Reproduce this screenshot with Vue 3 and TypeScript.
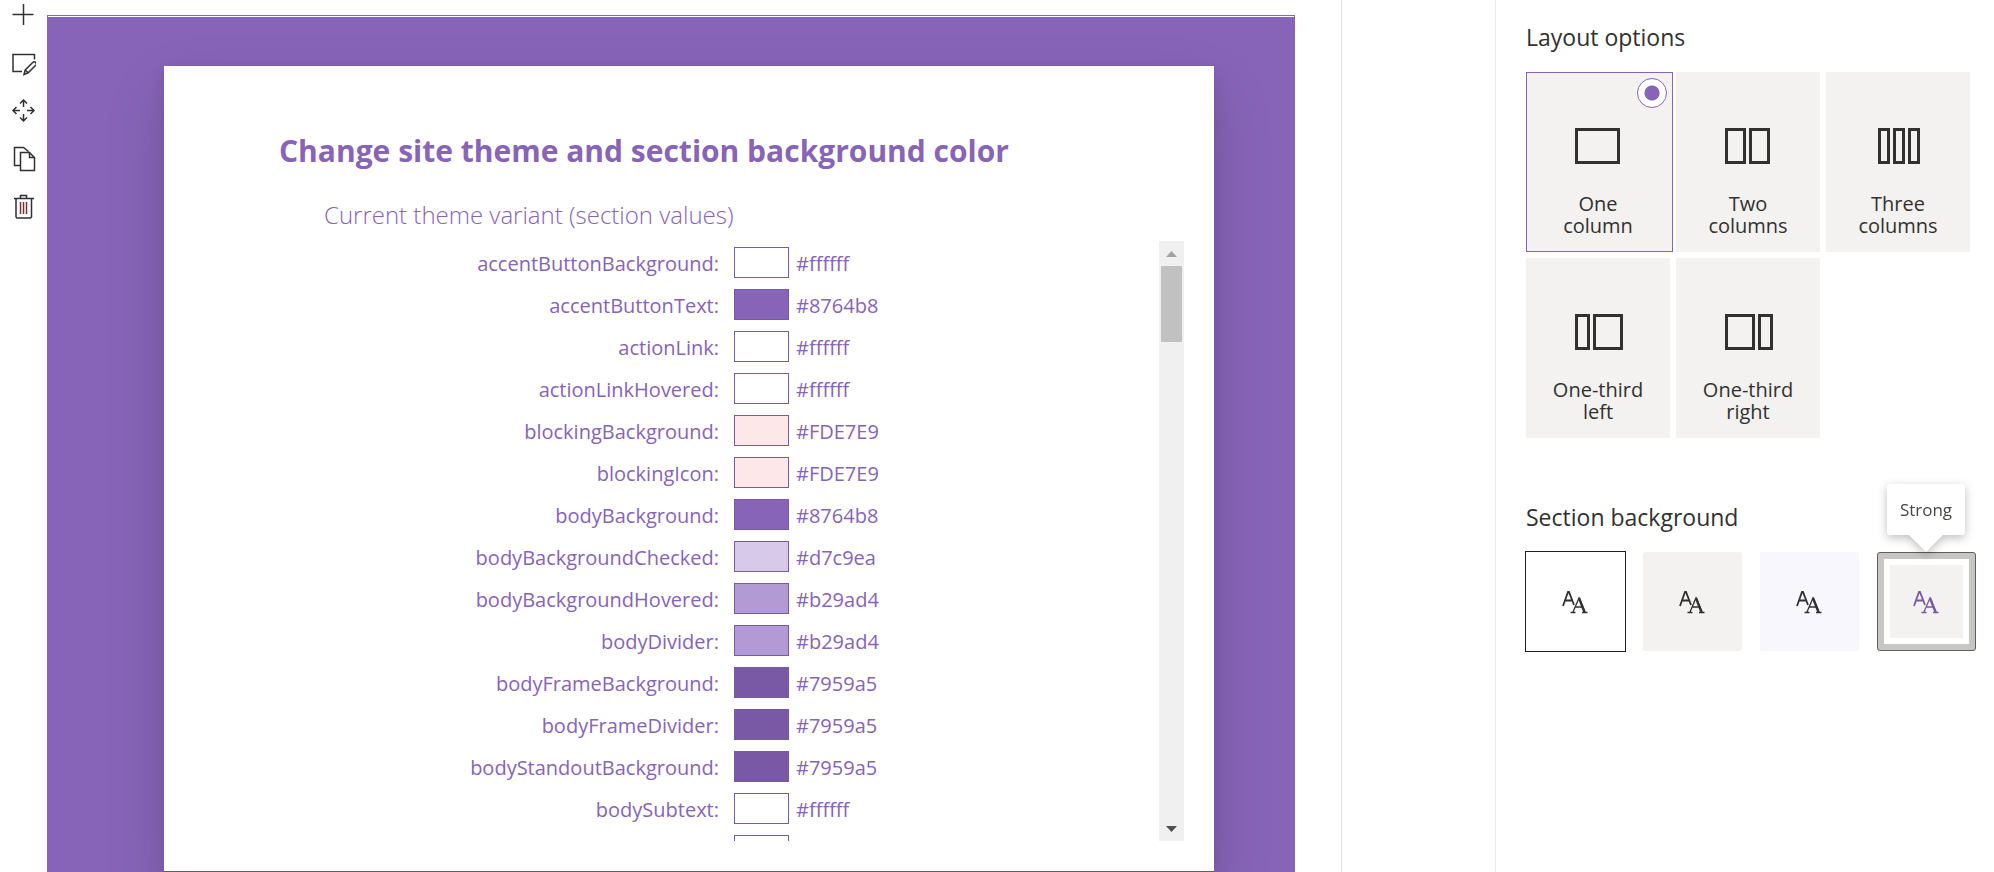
<script setup lang="ts">
import { computed, ref } from 'vue'

interface Slot { name: string; value: string }
interface LayoutOption { id: string; lines: [string, string]; rects: [number, number][] }
interface Shade { id: string; label: string }

const slots: Slot[] = [
  { name: 'accentButtonBackground', value: '#ffffff' },
  { name: 'accentButtonText', value: '#8764b8' },
  { name: 'actionLink', value: '#ffffff' },
  { name: 'actionLinkHovered', value: '#ffffff' },
  { name: 'blockingBackground', value: '#FDE7E9' },
  { name: 'blockingIcon', value: '#FDE7E9' },
  { name: 'bodyBackground', value: '#8764b8' },
  { name: 'bodyBackgroundChecked', value: '#d7c9ea' },
  { name: 'bodyBackgroundHovered', value: '#b29ad4' },
  { name: 'bodyDivider', value: '#b29ad4' },
  { name: 'bodyFrameBackground', value: '#7959a5' },
  { name: 'bodyFrameDivider', value: '#7959a5' },
  { name: 'bodyStandoutBackground', value: '#7959a5' },
  { name: 'bodySubtext', value: '#ffffff' },
  { name: 'bodyText', value: '#ffffff' },
]

// Each pair is the left edge and the width of one column in the glyph.
const layouts: LayoutOption[] = [
  { id: 'one', lines: ['One', 'column'], rects: [[1, 45]] },
  { id: 'two', lines: ['Two', 'columns'], rects: [[1, 21], [25, 21]] },
  { id: 'three', lines: ['Three', 'columns'], rects: [[4, 12], [19, 12], [34, 12]] },
  { id: 'left', lines: ['One-third', 'left'], rects: [[1, 15], [19, 30]] },
  { id: 'right', lines: ['One-third', 'right'], rects: [[1, 30], [34, 15]] },
]

const shades: Shade[] = [
  { id: 'none', label: 'None' },
  { id: 'neutral', label: 'Neutral' },
  { id: 'soft', label: 'Soft' },
  { id: 'strong', label: 'Strong' },
]

const layout = ref('one')
const shade = ref('none')
const list = ref<HTMLElement | null>(null)
const scrolled = ref(0)
const thumbOffset = computed(() => `${Math.round(scrolled.value * 474)}px`)

function onScroll() {
  const el = list.value
  if (!el) return
  scrolled.value = el.scrollTop / Math.max(1, el.scrollHeight - el.clientHeight)
}
function step(amount: number) {
  list.value?.scrollBy({ top: amount })
}
</script>

<template>
  <div class="page">
    <div class="toolbar" role="toolbar" aria-label="Section">
      <button type="button" aria-label="Add section">
        <svg width="26" height="26" viewBox="0 0 26 26"><path d="M2.5 14.500h21M13.500 4v21" /></svg>
      </button>
      <button type="button" aria-label="Edit section">
        <svg width="26" height="26" viewBox="0 0 26 26"><path d="M12 21.500H3V4.500h21.500v5M14 24.500l1.200-4.500 7.500-7.500a2 2 0 0 1 3 2.800l-7.500 7.500zM15.200 20l3 2.800" /></svg>
      </button>
      <button type="button" aria-label="Move section">
        <svg width="26" height="26" viewBox="0 0 26 26"><path d="M13.500 9V2M10 5.500 13.500 2 17 5.500M13.500 16v7M10 19.500l3.500 3.500 3.500-3.500M10 12.500H3M6.500 9 3 12.500 6.500 16M17 12.500h7M20.500 9l3.500 3.500-3.500 3.500" /></svg>
      </button>
      <button type="button" aria-label="Duplicate section">
        <svg width="26" height="26" viewBox="0 0 26 26"><path d="M10 19.500H4.500v-18h9l5 4M10.500 6.500h9l5 5v13h-14zM19.500 6.500v5h5" /></svg>
      </button>
      <button type="button" aria-label="Delete section">
        <svg width="26" height="26" viewBox="0 0 26 26"><path d="M4 4.500h20M10.500 4.500v-3h6v3M6 4.500v18.500l1 1h13.500l1-1v-18.500" /><path class="slats" d="M10.500 8v12M13.500 8v12M16.500 8v12" /></svg>
      </button>
    </div>

    <main class="canvas">
      <section class="card">
        <h1>Change site theme and section background color</h1>
        <h2>Current theme variant (section values)</h2>
        <div class="viewer">
          <ul ref="list" class="slots" tabindex="0" @scroll="onScroll">
            <li v-for="s in slots" :key="s.name">
              <span class="name">{{ s.name }}:</span>
              <span class="chip" :style="{ background: s.value }"></span>
              <span class="value">{{ s.value }}</span>
            </li>
          </ul>
          <div class="scrollbar">
            <button type="button" aria-label="Scroll up" @click="step(-42)">
              <svg class="up" width="11" height="6" viewBox="0 0 11 6"><path d="M0 6 5.500 0 11 6z" /></svg>
            </button>
            <div class="track"><div class="thumb" :style="{ marginTop: thumbOffset }"></div></div>
            <button type="button" aria-label="Scroll down" @click="step(42)">
              <svg class="down" width="11" height="6" viewBox="0 0 11 6"><path d="M0 0h11L5.500 6z" /></svg>
            </button>
          </div>
        </div>
      </section>
    </main>

    <div class="gutter"></div>

    <aside class="pane">
      <fieldset>
        <legend>Layout options</legend>
        <div class="layouts">
          <label v-for="o in layouts" :key="o.id" class="tile" :class="{ selected: layout === o.id }">
            <input v-model="layout" type="radio" name="layout" :value="o.id" />
            <svg width="52" height="36" viewBox="-2 0 52 36">
              <rect v-for="[x, w] in o.rects" :key="x" :x="x + 1.5" y="1.500" :width="w - 3" height="33" />
            </svg>
            <span>{{ o.lines[0] }}<br />{{ o.lines[1] }}</span>
          </label>
        </div>
      </fieldset>

      <fieldset class="backgrounds">
        <legend>Section background</legend>
        <div class="shades">
          <button
            v-for="s in shades"
            :key="s.id"
            type="button"
            class="shade"
            :class="[s.id, { current: shade === s.id }]"
            :aria-label="s.label"
            :aria-pressed="shade === s.id"
            @click="shade = s.id"
          >
            <span class="inner">
              <svg width="26" height="24" viewBox="1 0 26 24">
                <path class="sans" d="M1 16 6 2h1l5 13M3 10.500h7" />
                <path class="serif" d="M11 22 17 8l6 14M13 17h8M8.500 22.500h5M20 22.500h5.500" />
                <path class="stem" d="m17 8 5.500 14" />
              </svg>
            </span>
            <span v-if="s.id === 'strong'" class="tooltip" role="tooltip">{{ s.label }}</span>
          </button>
        </div>
      </fieldset>
    </aside>
  </div>
</template>

<style>
body {
  margin: 0;
  background: #fff;
}
</style>

<style scoped>
.page {
  display: flex;
  height: 100vh;
  overflow: hidden;
  font-family: "Open Sans", "Noto Sans", sans-serif;
  color: #323130;
}
button {
  padding: 0;
  border: 0;
  background: none;
  font: inherit;
  color: inherit;
}
.toolbar {
  flex: none;
  box-sizing: border-box;
  width: 47px;
  padding-right: 2px;
  display: flex;
  flex-direction: column;
  gap: 22px;
}
.toolbar button {
  display: flex;
  justify-content: center;
  height: 26px;
}
.toolbar button:first-child {
  margin-bottom: 2px;
}
.toolbar svg {
  fill: none;
  stroke: #323130;
  stroke-width: 1.5;
}
.toolbar .slats {
  stroke: #7a3434;
}
.canvas {
  flex: 1;
  min-width: 0;
  box-sizing: border-box;
  margin: 15px 46px 0 0;
  padding: 50px 80px 0 116px;
  background: #8764b8;
  border: 1px solid #8764b8;
  border-bottom: 0;
  box-shadow: inset 0 1px #fff;
  overflow: hidden;
}
.card {
  box-sizing: border-box;
  height: 100%;
  padding: 64px 30px 0 115px;
  border-bottom: 1px solid #6b5095;
  background: #fff;
  color: #8764b8;
  box-shadow: 0 26px 58px rgba(0, 0, 0, 0.14), 0 5px 14px rgba(0, 0, 0, 0.1);
}
h1 {
  margin: 0;
  font-size: 30px;
  line-height: 42px;
  font-weight: 700;
  white-space: nowrap;
}
h2 {
  margin: 26px 0 0 45px;
  font-size: 24px;
  line-height: 34px;
  font-weight: 300;
  white-space: nowrap;
}
.viewer {
  display: flex;
  height: 600px;
  margin: 9px 0 0 45px;
}
.slots {
  flex: 1;
  margin: 0;
  padding: 0;
  list-style: none;
  overflow-y: auto;
  scrollbar-width: none;
  outline: none;
  font-size: 20px;
}
.slots li {
  display: grid;
  grid-template-columns: 395px 55px 1fr;
  align-items: center;
  height: 31px;
  margin: 6px 0 11px;
  line-height: 29px;
}
.name {
  text-align: right;
}
.slots .chip {
  height: 29px;
  margin-left: 15px;
  width: 53px;
  border: 1px solid #7959a5;
}
.value {
  margin-left: 22px;
}
.name,
.value {
  padding-top: 2px;
}
.scrollbar {
  flex: none;
  width: 25px;
  display: flex;
  flex-direction: column;
  background: #f0f0f0;
}
.scrollbar button {
  display: grid;
  place-items: center;
  height: 25px;
}
.track {
  flex: 1;
  padding: 0 2px;
}
.thumb {
  height: 76px;
  background: #c1c1c1;
}
.up {
  fill: #a3a3a3;
}
.down {
  fill: #505050;
}
.gutter {
  flex: none;
  width: 153px;
  border-left: 1px solid #e1e1e1;
}
.pane {
  flex: none;
  box-sizing: border-box;
  width: 499px;
  padding: 19px 18px 0 30px;
  border-left: 1px solid #edebe9;
}
fieldset {
  margin: 0;
  padding: 0;
  border: 0;
  min-width: 0;
}
legend {
  padding: 0;
  font-size: 23px;
  line-height: 36px;
}
.layouts {
  display: grid;
  grid-template-columns: repeat(3, 144px);
  gap: 6px;
  margin-top: 17px;
}
.tile {
  position: relative;
  box-sizing: border-box;
  height: 180px;
  padding-top: 56px;
  display: flex;
  flex-direction: column;
  align-items: center;
  background: #f3f2f1;
  text-align: center;
  font-size: 20px;
  line-height: 22px;
}
.tile.selected {
  width: 147px;
  padding-top: 55px;
  padding-right: 3px;
  border: 1px solid #8764b8;
}
.tile svg {
  fill: none;
  stroke: #323130;
  stroke-width: 3;
}
.tile span {
  margin-top: 29px;
}
.tile input {
  position: absolute;
  top: 5px;
  right: 5px;
  width: 30px;
  height: 30px;
  margin: 0;
  appearance: none;
  border-radius: 50%;
}
.tile input:checked {
  border: 1px solid #8764b8;
  background: radial-gradient(circle, #8764b8 7px, #fff 8px);
}
.backgrounds {
  margin-top: 61px;
}
.shades {
  display: grid;
  grid-template-columns: repeat(4, 99px);
  gap: 18px;
  margin-top: 17px;
}
.shade {
  position: relative;
  height: 99px;
  display: grid;
  place-items: center;
  border-radius: 3px;
}
.shade svg {
  display: block;
  overflow: visible;
  fill: none;
  stroke: currentColor;
}
.sans {
  stroke-width: 1.8;
}
.serif {
  stroke-width: 1.3;
}
.stem {
  stroke-width: 2.4;
}
.current {
  border-radius: 0;
  outline: 1px solid #201f1e;
}
.neutral {
  background: #f3f2f1;
}
.soft {
  background: #f8f7fd;
}
.strong {
  border: 1px solid #605e5c;
  background: #c8c6c4;
  color: #7959a5;
}
.strong .inner {
  display: grid;
  place-items: center;
  width: 73px;
  height: 73px;
  border: 6px solid #fff;
  background: #f3f2f1;
}
.tooltip {
  position: absolute;
  left: 9px;
  bottom: 115px;
  width: 78px;
  border-radius: 3px;
  background: #fff;
  color: #484644;
  font-size: 17px;
  line-height: 51px;
  filter: drop-shadow(0 3px 5px rgba(0, 0, 0, 0.25));
}
.tooltip::after {
  content: "";
  position: absolute;
  top: 100%;
  left: 50%;
  margin-left: -17px;
  border: 17px solid transparent;
  border-top-color: #fff;
  border-bottom-width: 0;
}
</style>
